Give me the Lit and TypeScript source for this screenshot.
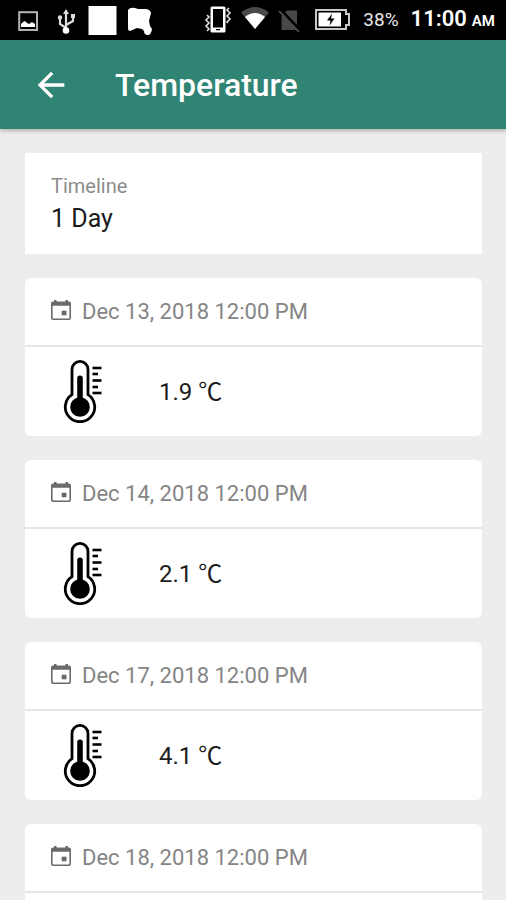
import { LitElement, html, css, svg } from "lit";
import { customElement, property } from "lit/decorators.js";

interface Reading {
  date: string;
  value: string;
}

@customElement("status-bar")
export class StatusBar extends LitElement {
  static styles = css`
    :host {
      display: flex;
      align-items: center;
      flex: none;
      height: 40px;
      padding: 0 11px 0 14px;
      background: #000;
      color: #e8e8e8;
    }
    .group {
      display: flex;
      align-items: center;
      gap: 8px;
    }
    .end {
      margin-left: auto;
    }
    .icon {
      display: block;
      width: 29px;
      height: 30px;
    }
    .battery {
      width: 36px;
    }
    .percent {
      margin-left: 4px;
      font-size: 19px;
      line-height: 24px;
    }
    .clock {
      margin-left: 4px;
      font-size: 22px;
      line-height: 28px;
      font-weight: 600;
      color: #fff;
      white-space: nowrap;
    }
    .meridiem {
      margin-left: 5px;
      font-size: 15px;
    }
  `;

  render() {
    return html`
      <div class="group">
        <svg class="icon" viewBox="0 0 29 30" aria-hidden="true">
          <rect x="5.2" y="7.2" width="17.8" height="17.8" fill="none" stroke="#b4b4b4" stroke-width="2" />
          <path d="M7 22v-3l2-2 2-1 2 2 2 1 3-2 3 2v3z" fill="#fff" />
        </svg>
        <svg class="icon" viewBox="0 0 29 30" aria-hidden="true">
          <path d="M15 7v18M15 23L9 19V13M15 20l7-4V11" fill="none" stroke="#ddd" stroke-width="2.200" />
          <path d="M15 4l3 5h-6zM20 9h4v4h-4z" fill="#ddd" />
          <circle cx="9" cy="12.500" r="2.200" fill="#ddd" />
          <circle cx="15" cy="25.500" r="3.300" fill="#fff" />
        </svg>
        <svg class="icon" viewBox="0 0 29 30" aria-hidden="true">
          <rect x="0.500" y="1" width="28" height="29" fill="#fff" />
        </svg>
        <svg class="icon" viewBox="0 0 29 30" aria-hidden="true">
          <path d="M3 5q2-3 7-2l3 1h7q5 0 6 4l-2 8 1 5 2 3q-1 6-4 6-4 0-4-4l-2-2-5-1-7 3q-2 0-2-3z" fill="#fff" />
        </svg>
      </div>
      <div class="group end">
        <svg class="icon" viewBox="0 0 29 30" aria-hidden="true">
          <path fill-rule="evenodd" d="M8 1.500h12q1.500 0 1.500 1.500v23q0 1.500-1.500 1.500H8q-1.500 0-1.500-1.500V3q0-1.500 1.500-1.500zM9 4v18.500h10V4zM12 24v1.200h4V24z" fill="#fff" />
          <path d="M3 10l2 2-3 3 3 3-3 3 3 3-2 2M25 3l-2 2 3 3-3 3 3 3-3 3 1 1" fill="none" stroke="#ddd" stroke-width="1.600" />
        </svg>
        <svg class="icon" viewBox="0 0 29 30" aria-hidden="true">
          <path d="M0 7.500Q14-3.500 28 7.500L14 24z" fill="#4a4a4a" />
          <path d="M4 12Q14 4 24 12L14 24z" fill="#fff" />
        </svg>
        <svg class="icon" viewBox="0 0 29 30" aria-hidden="true">
          <path d="M9 5.500h10V25H3.500V11z" fill="#484848" />
          <path d="M2 5l20 21" stroke="#000" stroke-width="4" />
          <path d="M1 6l20 21" stroke="#555" stroke-width="1.800" />
        </svg>
        <svg class="icon battery" viewBox="0 0 36 30" aria-hidden="true">
          <path d="M1 5h30v4h3v11h-3v4H1z" fill="none" stroke="#c8c8c8" stroke-width="2" />
          <path d="M3.500 7.500h22.500v14H3.500z" fill="#fff" />
          <path d="M17 8.500l-5 7h3.500l-1 5 5-7H16z" fill="#000" />
        </svg>
        <span class="percent">38%</span>
        <span class="clock">11:00<span class="meridiem">AM</span></span>
      </div>
    `;
  }
}

@customElement("reading-card")
export class ReadingCard extends LitElement {
  @property() date = "";
  @property() value = "";

  static styles = css`
    :host {
      display: block;
      flex: none;
      background: #fff;
      border-radius: 6px;
    }
    .head {
      display: flex;
      align-items: center;
      gap: 11px;
      height: 67px;
      padding: 0 26px;
      border-bottom: 2px solid #e6e6e6;
      color: #858585;
      font-size: 22px;
      line-height: 28px;
    }
    .calendar {
      width: 20px;
      height: 20px;
      margin-bottom: 4px;
    }
    .body {
      display: flex;
      align-items: center;
      gap: 56px;
      height: 89px;
      padding: 0 38px;
      color: #1c1c1c;
      font-size: 24px;
      line-height: 28px;
    }
    .thermo {
      width: 40px;
      height: 63px;
    }
  `;

  render() {
    const ticks = [8, 14, 20.5, 27, 33];
    return html`
      <div class="head">
        <svg class="calendar" viewBox="0 0 20 20" aria-hidden="true">
          <path fill-rule="evenodd" d="M3 0h2.500v1.500h9V0H17v1.500h1q2 0 2 2V18q0 2-2 2H2q-2 0-2-2V3.500q0-2 2-2h1zM1.600 5.800v11.600q0 1 1 1h14.800q1 0 1-1V5.800z" fill="#6a6a6a" />
          <rect x="10.700" y="10.700" width="4.800" height="4.600" fill="#6a6a6a" />
        </svg>
        <time>${this.date}</time>
      </div>
      <div class="body">
        <svg class="thermo" viewBox="0 0 40 63" aria-hidden="true">
          <path d="M9 34.700V9.400a8 8 0 0 1 16 0V34.700A14.700 14.700 0 1 1 9 34.700z" fill="none" stroke="#000" stroke-width="2.800" />
          <path d="M14.200 40V18q0-2.500 2.800-2.500t2.800 2.500V40z" />
          <circle cx="17" cy="47" r="9.800" />
          ${ticks.map(
            (y, i) => svg`<path d="M29.500 ${y}h${i % 2 ? 5.5 : 9}" stroke="#000" stroke-width="2.600" />`
          )}
        </svg>
        <span>${this.value}</span>
      </div>
    `;
  }
}

@customElement("app-root")
export class AppRoot extends LitElement {
  private readings: Reading[] = [
    { date: "Dec 13, 2018 12:00 PM", value: "1.9 ℃" },
    { date: "Dec 14, 2018 12:00 PM", value: "2.1 ℃" },
    { date: "Dec 17, 2018 12:00 PM", value: "4.1 ℃" },
    { date: "Dec 18, 2018 12:00 PM", value: "" },
  ];

  static styles = css`
    :host {
      display: flex;
      flex-direction: column;
      height: 100vh;
      overflow: hidden;
      background: #ededed;
      font-family: Roboto, "Noto Sans CJK SC", sans-serif;
    }
    .appbar {
      display: flex;
      align-items: center;
      flex: none;
      gap: 44px;
      height: 89px;
      padding: 0 31px;
      background: #308474;
      color: #fff;
      box-shadow: 0 2px 4px rgba(0, 0, 0, 0.25);
      z-index: 1;
    }
    .back {
      display: block;
      padding: 0;
      border: 0;
      background: none;
      color: inherit;
    }
    .arrow {
      display: block;
      width: 40px;
      height: 40px;
    }
    h1 {
      margin: 0;
      font-size: 32px;
      line-height: 42px;
      font-weight: 500;
    }
    main {
      display: flex;
      flex-direction: column;
      gap: 24px;
      flex: 1;
      min-height: 0;
      padding: 24px 24px 24px 25px;
      overflow-y: auto;
      scrollbar-width: none;
    }
    .timeline {
      display: flex;
      flex-direction: column;
      flex: none;
      gap: 5px;
      padding: 20px 26px;
      background: #fff;
    }
    label {
      color: #8c8c8c;
      font-size: 20px;
      line-height: 26px;
    }
    select {
      appearance: none;
      margin: 0;
      padding: 0;
      border: 0;
      background: none;
      color: #1c1c1c;
      font: inherit;
      font-size: 25px;
      line-height: 30px;
    }
  `;

  render() {
    return html`
      <status-bar></status-bar>
      <header class="appbar">
        <button class="back" type="button" aria-label="Back">
          <svg class="arrow" viewBox="0 0 24 24" aria-hidden="true">
            <path d="M20 11H7.830l5.590-5.590L12 4l-8 8 8 8 1.410-1.410L7.830 13H20z" fill="currentColor" />
          </svg>
        </button>
        <h1>Temperature</h1>
      </header>
      <main>
        <div class="timeline">
          <label for="range">Timeline</label>
          <select id="range">
            <option>1 Day</option>
          </select>
        </div>
        ${this.readings.map(
          (r) => html`<reading-card .date=${r.date} .value=${r.value}></reading-card>`
        )}
      </main>
    `;
  }
}
